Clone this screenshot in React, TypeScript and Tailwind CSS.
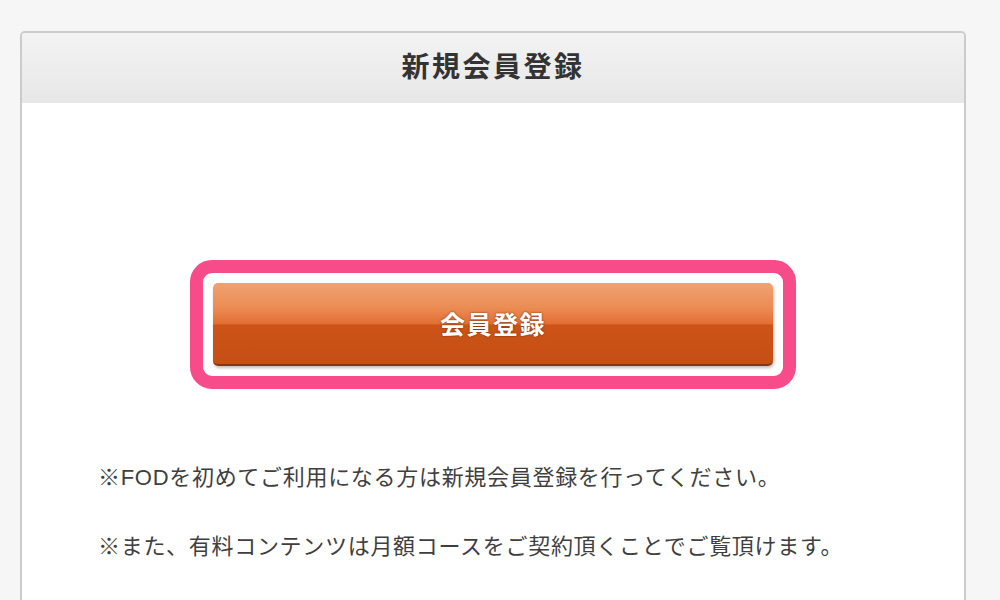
export default function App() {
    return (
        <div
            className="h-[600px] bg-[#f6f6f6] pt-[31px] pl-[20px] overflow-hidden"
            style={{ fontFamily: '"Liberation Sans", "Noto Sans CJK JP", sans-serif' }}
        >
            <div className="w-[946px] h-[620px] bg-white border-2 border-[#cbcbcb] rounded-[5px] overflow-hidden">
                <div className="h-[70px] flex items-center justify-center bg-gradient-to-b from-[#f3f3f3] to-[#e7e7e7]">
                    <h1 className="text-[28px] font-bold text-[#333333] tracking-[2.5px]">新規会員登録</h1>
                </div>

                <div className="flex justify-center pt-[157px]">
                    <div className="border-[13px] border-[#f84b89] rounded-[22px] p-[10px] bg-white">
                        <button
                            className="w-[560px] h-[83px] pt-[5px] rounded-[5px] border-b-2 border-[#8a3510] bg-[linear-gradient(to_bottom,#f0a271_0%,#ec8c55_30%,#e36f33_50%,#cd5317_52%,#c54f15_100%)] shadow-[1px_2px_3px_rgba(0,0,0,0.25)] text-white text-[25px] font-bold tracking-[1.5px] [text-shadow:0_0_2px_rgba(90,30,0,0.9)]"
                        >
                            会員登録
                        </button>
                    </div>
                </div>

                <div className="pl-[76px] pt-[72px] text-[22px] leading-[33px] tracking-[0.7px] text-[#3f3f3f]">
                    <p>※FODを初めてご利用になる方は新規会員登録を行ってください。</p>
                    <p className="mt-[36px]">※また、有料コンテンツは月額コースをご契約頂くことでご覧頂けます。</p>
                </div>
            </div>
        </div>
    )
}
